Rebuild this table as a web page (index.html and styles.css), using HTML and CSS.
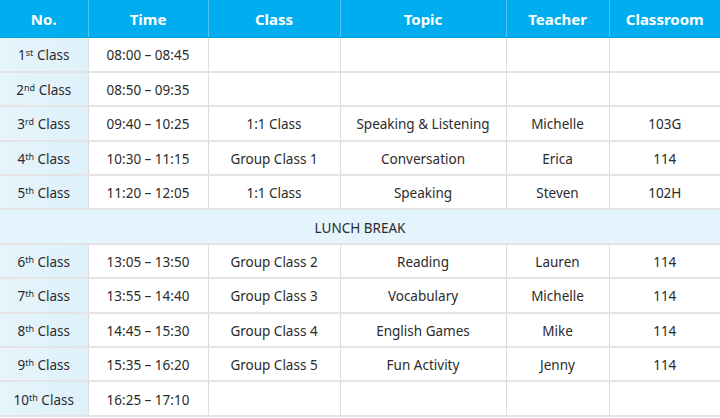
FILE: index.html
```html
<!DOCTYPE html>
<html>
<head>
<meta charset="utf-8">
<link rel="stylesheet" href="styles.css">
</head>
<body>
<table class="schedule">
  <colgroup>
    <col class="c1"><col class="c2"><col class="c3"><col class="c4"><col class="c5"><col class="c6">
  </colgroup>
  <thead>
    <tr><th>No.</th><th>Time</th><th>Class</th><th>Topic</th><th>Teacher</th><th>Classroom</th></tr>
  </thead>
  <tbody>
    <tr><td class="no">1<sup>st</sup> Class</td><td>08:00 – 08:45</td><td></td><td></td><td></td><td></td></tr>
    <tr><td class="no">2<sup>nd</sup> Class</td><td>08:50 – 09:35</td><td></td><td></td><td></td><td></td></tr>
    <tr><td class="no">3<sup>rd</sup> Class</td><td>09:40 – 10:25</td><td>1:1 Class</td><td>Speaking &amp; Listening</td><td>Michelle</td><td>103G</td></tr>
    <tr><td class="no">4<sup>th</sup> Class</td><td>10:30 – 11:15</td><td>Group Class 1</td><td>Conversation</td><td>Erica</td><td>114</td></tr>
    <tr><td class="no">5<sup>th</sup> Class</td><td>11:20 – 12:05</td><td>1:1 Class</td><td>Speaking</td><td>Steven</td><td>102H</td></tr>
    <tr class="lunch"><td colspan="6">LUNCH BREAK</td></tr>
    <tr><td class="no">6<sup>th</sup> Class</td><td>13:05 – 13:50</td><td>Group Class 2</td><td>Reading</td><td>Lauren</td><td>114</td></tr>
    <tr><td class="no">7<sup>th</sup> Class</td><td>13:55 – 14:40</td><td>Group Class 3</td><td>Vocabulary</td><td>Michelle</td><td>114</td></tr>
    <tr><td class="no">8<sup>th</sup> Class</td><td>14:45 – 15:30</td><td>Group Class 4</td><td>English Games</td><td>Mike</td><td>114</td></tr>
    <tr><td class="no">9<sup>th</sup> Class</td><td>15:35 – 16:20</td><td>Group Class 5</td><td>Fun Activity</td><td>Jenny</td><td>114</td></tr>
    <tr><td class="no">10<sup>th</sup> Class</td><td>16:25 – 17:10</td><td></td><td></td><td></td><td></td></tr>
  </tbody>
</table>
</body>
</html>
```

FILE: styles.css
```css
html, body {
  margin: 0;
  padding: 0;
  background: #ffffff;
}
.schedule {
  width: 720px;
  border-collapse: collapse;
  table-layout: fixed;
  font-family: "Noto Sans", "Open Sans", sans-serif;
  color: #2b2b2b;
}
.c1 { width: 88px; }
.c2 { width: 120px; }
.c3 { width: 132px; }
.c4 { width: 166px; }
.c5 { width: 103px; }
.c6 { width: 111px; }
.schedule th {
  height: 37px;
  padding: 0;
  background: #00adee;
  color: #ffffff;
  font-size: 15px;
  font-weight: 700;
  text-align: center;
  border-left: 1px solid #4cc6f3;
  border-bottom: 1px solid #00a2e0;
}
.schedule th:first-child { border-left: none; }
.schedule td {
  height: 32.4px;
  padding: 2px 0 0;
  box-sizing: border-box;
  font-size: 13.5px;
  text-align: center;
  border-left: 1px solid #dcdcdc;
  border-bottom: 2px solid #e4e4e4;
}
.schedule tbody tr { height: 34.4px; }
.schedule td:first-child { border-left: none; }
.schedule td.no {
  background: linear-gradient(to right, #e6f4fb, #def1fa);
}
.schedule sup {
  font-size: 9px;
  vertical-align: 4px;
  line-height: 0;
}
.schedule .lunch td {
  background: #e4f4fc;
  border-left: none;
}
```
